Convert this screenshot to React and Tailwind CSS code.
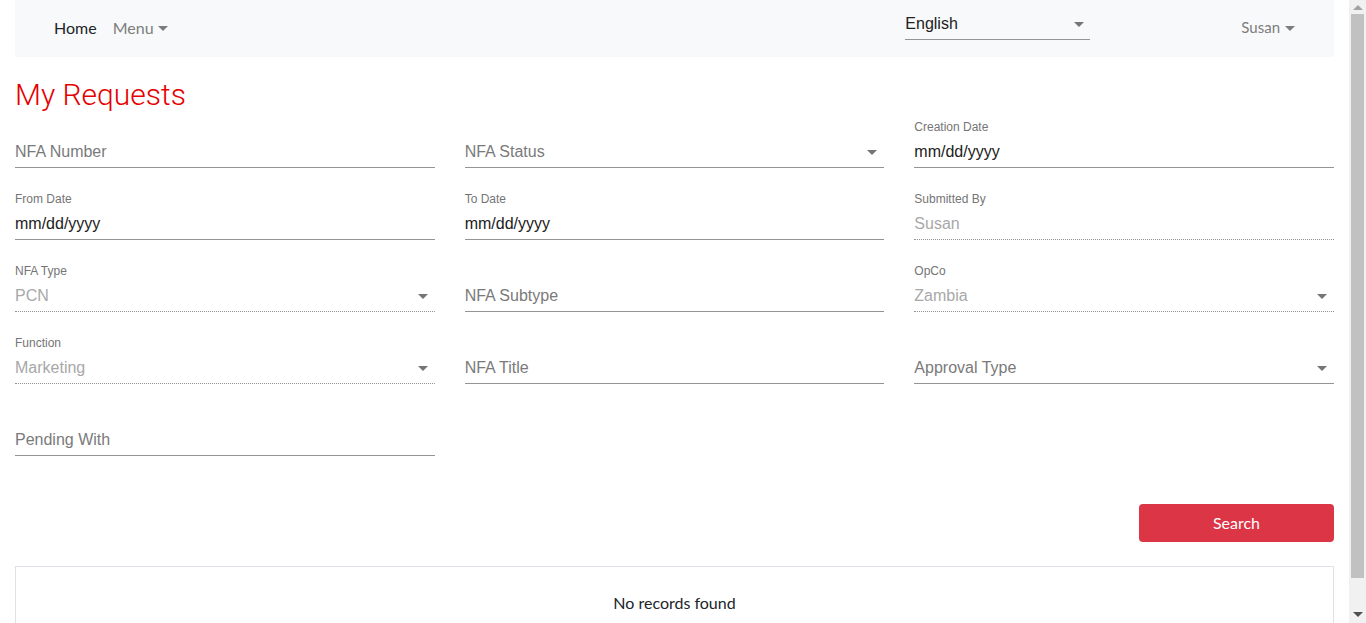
import React from 'react';

const Caret = ({ className = '' }) => (
  <span className={`inline-block w-0 h-0 border-l-[5px] border-r-[5px] border-t-[5px] border-l-transparent border-r-transparent ${className}`} />
);

function Field({ label, value, placeholder, select, disabled }) {
  return (
    <div className="flex flex-col">
      <div className="h-[22px] text-[12px] leading-[22px] text-[#757575]">{label || ''}</div>
      <div
        className={`h-[30px] pb-[2px] flex items-center justify-between pr-[7px] border-b border-[#949494] ${
          disabled ? 'border-dotted' : 'border-solid'
        }`}
      >
        <span
          className={`text-[16px] leading-[28px] ${
            value ? (disabled ? 'text-[#a8a8a8]' : 'text-[#212121]') : 'text-[#7a7a7a]'
          }`}
        >
          {value || placeholder}
        </span>
        {select && <Caret className="border-t-[#757575] mt-[2px]" />}
      </div>
    </div>
  );
}

export default function App() {
  const fields = [
    { placeholder: 'NFA Number' },
    { placeholder: 'NFA Status', select: true },
    { label: 'Creation Date', value: 'mm/dd/yyyy' },
    { label: 'From Date', value: 'mm/dd/yyyy' },
    { label: 'To Date', value: 'mm/dd/yyyy' },
    { label: 'Submitted By', value: 'Susan', disabled: true },
    { label: 'NFA Type', value: 'PCN', select: true, disabled: true },
    { placeholder: 'NFA Subtype' },
    { label: 'OpCo', value: 'Zambia', select: true, disabled: true },
    { label: 'Function', value: 'Marketing', select: true, disabled: true },
    { placeholder: 'NFA Title' },
    { placeholder: 'Approval Type', select: true },
    { placeholder: 'Pending With' },
  ];

  return (
    <div className="flex h-[623px] overflow-hidden bg-white font-['Liberation_Sans',Arial,sans-serif]">
      <div className="flex-1 px-[15px] flex flex-col">
        {/* Navbar */}
        <nav className="h-[57px] shrink-0 bg-[#f8f9fa] flex items-start px-[39px] font-['Lato',sans-serif]">
          <div className="flex items-center h-[56px] gap-[16px] text-[16px]">
            <span className="text-[#212529]">Home</span>
            <span className="flex items-center gap-[4px] text-[#7d7d7d]">
              Menu
              <Caret className="border-t-[#7d7d7d] border-l-[4px] border-r-[4px]" />
            </span>
          </div>
          <div className="ml-auto mt-[9px] w-[185px] h-[31px] border-b border-[#949494] flex items-center justify-between pr-[6px] font-['Liberation_Sans',Arial,sans-serif]">
            <span className="text-[16px] text-[#212121] leading-[28px]">English</span>
            <Caret className="border-t-[#757575]" />
          </div>
          <div className="ml-[151px] flex items-center h-[54px] gap-[5px] text-[15px] text-[#7d7d7d]">
            Susan
            <Caret className="border-t-[#7d7d7d] border-l-[4.5px] border-r-[4.5px] mt-[2px]" />
          </div>
        </nav>

        <h1 className="mt-[19px] h-[38px] leading-[38px] text-[30px] font-light text-[#e60000] font-['Roboto',sans-serif]">
          My Requests
        </h1>

        <div className="mt-[2px] grid grid-cols-3 gap-x-[30px] gap-y-[20px]">
          {fields.map((f, i) => (
            <Field key={i} {...f} />
          ))}
        </div>

        <div className="mt-[48px] flex justify-end">
          <button className="w-[195px] h-[38px] rounded-[4px] bg-[#dc3545] text-white text-[16px] font-['Lato',sans-serif]">
            Search
          </button>
        </div>

        <div className="mt-[24px] h-[80px] shrink-0 border border-[#dee2e6] pt-[24px] text-center text-[16px] text-[#212529] font-['Lato',sans-serif]">
          No records found
        </div>
      </div>

      {/* Scrollbar */}
      <div className="w-[17px] shrink-0 bg-[#f1f1f1] flex flex-col items-center">
        <div className="h-[14px] flex items-center justify-center">
          <Caret className="rotate-180 border-t-[#a3a3a3] border-l-[4px] border-r-[4px] border-t-[4px]" />
        </div>
        <div className="w-[13px] h-[564px] bg-[#c1c1c1]" />
        <div className="flex-1" />
        <div className="h-[17px] flex items-center justify-center">
          <Caret className="border-t-[#505050] border-l-[4px] border-r-[4px] border-t-[4px]" />
        </div>
      </div>
    </div>
  );
}
